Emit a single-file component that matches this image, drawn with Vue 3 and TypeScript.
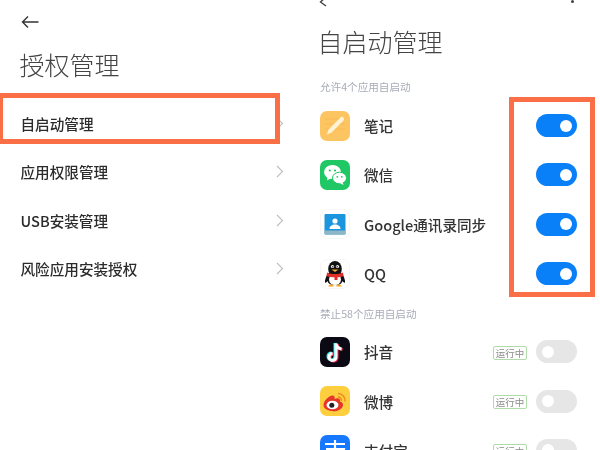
<script setup lang="ts">
interface MenuItem {
  label: string
}

interface AppRow {
  name: string
  icon: string
  running?: boolean
}

const menu: MenuItem[] = [
  { label: '自启动管理' },
  { label: '应用权限管理' },
  { label: 'USB安装管理' },
  { label: '风险应用安装授权' }
]

const allowed: AppRow[] = [
  { name: '笔记', icon: 'note' },
  { name: '微信', icon: 'wechat' },
  { name: 'Google通讯录同步', icon: 'contacts' },
  { name: 'QQ', icon: 'qq' }
]

const blocked: AppRow[] = [
  { name: '抖音', icon: 'douyin', running: true },
  { name: '微博', icon: 'weibo', running: true },
  { name: '支付宝', icon: 'alipay', running: true }
]
</script>

<template>
  <div class="page">
    <section class="left">
      <svg class="back" width="18" height="14" viewBox="0 0 18 14">
        <path d="M7 1.5 1.5 7 7 12.5M1.5 7H17.5" fill="none" stroke="#333" stroke-width="1.4" />
      </svg>
      <h1 class="title-left">授权管理</h1>
      <ul class="menu">
        <li v-for="item in menu" :key="item.label" class="menu-row">
          <span>{{ item.label }}</span>
          <svg width="8" height="13" viewBox="0 0 8 13">
            <path d="M1 1l5.5 5.5L1 12" fill="none" stroke="#bdbdbd" stroke-width="1.1" />
          </svg>
        </li>
      </ul>
      <div class="frame frame-menu"></div>
    </section>

    <section class="right">
      <div class="topbar">
        <svg width="12" height="8" viewBox="0 0 12 8">
          <path d="M7 -3 1.5 2 7 6" fill="none" stroke="#444" stroke-width="1.4" />
        </svg>
        <span class="dot"></span>
      </div>
      <h2 class="title-right">自启动管理</h2>
      <p class="caption">允许4个应用自启动</p>
      <ul class="apps apps-first">
        <li v-for="app in allowed" :key="app.name" class="app-row">
          <svg class="icon" width="30" height="30" viewBox="0 0 30 30">
            <template v-if="app.icon === 'note'">
              <rect width="30" height="30" rx="7" fill="#fdc561" />
              <path d="M5 8h20M5 13h20M5 18h20" stroke="#f5b54a" stroke-width=".7" />
              <path d="M7 23.5 8.5 18.5 20.5 6.5a2 2 0 0 1 3 3L11.5 21.5Z" fill="#fff3d6" />
            </template>
            <template v-else-if="app.icon === 'wechat'">
              <rect width="30" height="30" rx="7" fill="#1fc765" />
              <ellipse cx="12.5" cy="12" rx="8.5" ry="7" fill="#fff" />
              <path d="M7.5 16 7 20.5 11.5 18Z" fill="#fff" />
              <ellipse cx="19.5" cy="18" rx="7" ry="5.8" fill="#fff" stroke="#1fc765" stroke-width="1" />
              <path d="M22.5 22 23.5 25 20 23.2Z" fill="#fff" />
              <circle cx="9.8" cy="10.5" r="1.1" fill="#1fc765" />
              <circle cx="15" cy="10.5" r="1.1" fill="#1fc765" />
              <circle cx="17.3" cy="16.8" r=".9" fill="#1fc765" />
              <circle cx="21.8" cy="16.8" r=".9" fill="#1fc765" />
            </template>
            <template v-else-if="app.icon === 'contacts'">
              <rect x=".5" y=".5" width="29" height="29" rx="7" fill="#fff" stroke="#f6f6f6" />
              <rect x="4.5" y="5" width="21" height="20.5" rx="1" fill="#1b95dd" />
              <path d="M4.5 21.5h21v3a1 1 0 0 1-1 1h-19a1 1 0 0 1-1-1Z" fill="#8fb6c4" />
              <circle cx="15" cy="12" r="2.6" fill="#fff" />
              <path d="M9.5 20c0-3 2.5-4.5 5.500-4.500s5.500 1.500 5.500 4.500Z" fill="#fff" />
            </template>
            <template v-else>
              <rect x=".5" y=".5" width="29" height="29" rx="7" fill="#fff" stroke="#f6f6f6" />
              <ellipse cx="15" cy="10" rx="6.8" ry="8" fill="#111" />
              <path d="M8 14c-2 4-3.500 7-3 10 1-.5 2-1 2.500-2 1 3 3 4 7.500 4s6.500-1 7.500-4c.5 1 1.500 1.500 2.500 2 .5-3-1-6-3-10Z" fill="#111" />
              <ellipse cx="15" cy="20.5" rx="6" ry="5.5" fill="#fff" />
              <circle cx="12.5" cy="7.5" r="1.6" fill="#fff" />
              <circle cx="17.5" cy="7.5" r="1.6" fill="#fff" />
              <circle cx="12.8" cy="7.8" r=".7" fill="#111" />
              <circle cx="17.2" cy="7.8" r=".7" fill="#111" />
              <path d="M11.5 10.5h7L15 13Z" fill="#f5a623" />
              <path d="M7 13.5c5 2 11 2 16 0l.5 3.500c-2 .8-4 1.200-6 1.300V21h-3v-2.700c-3 0-6-.5-8-1.300Z" fill="#e0302a" />
              <path d="M8 27.5c1-2.500 4-2.500 5.500-1.500v1.500ZM22 27.500c-1-2.500-4-2.500-5.500-1.500v1.500Z" fill="#f5a623" />
            </template>
          </svg>
          <span class="app-name">{{ app.name }}</span>
          <span class="switch on"><i></i></span>
        </li>
      </ul>
      <p class="caption caption-second">禁止58个应用自启动</p>
      <ul class="apps apps-second">
        <li v-for="app in blocked" :key="app.name" class="app-row">
          <svg class="icon" width="30" height="30" viewBox="0 0 30 30">
            <template v-if="app.icon === 'douyin'">
              <rect width="30" height="30" rx="7" fill="#0b0a14" />
              <path d="M16 6.5v13.5a3.500 3.500 0 1 1-3.500-3.500M16 6.500c.5 3 2.500 5 5.500 5.500" fill="none" stroke="#25f4ee" stroke-width="3" transform="translate(-1 -.6)" />
              <path d="M16 6.5v13.5a3.500 3.500 0 1 1-3.500-3.500M16 6.500c.5 3 2.500 5 5.500 5.500" fill="none" stroke="#fe2c55" stroke-width="3" transform="translate(1 .6)" />
              <path d="M16 6.5v13.5a3.500 3.500 0 1 1-3.500-3.500M16 6.500c.5 3 2.500 5 5.500 5.500" fill="none" stroke="#fff" stroke-width="3" />
            </template>
            <template v-else-if="app.icon === 'weibo'">
              <rect width="30" height="30" rx="7" fill="#fdcf3f" />
              <path d="M13 25c-5.500 0-9.500-2.500-9.500-6 0-4 5.500-9.500 9-9.500 2 0 2.500 1.500 2 3.500 3-1.200 5.500-.8 5.500 1.500 0 .5 0 1 0 1 2 .5 3 1.800 3 3.500 0 3.500-4.500 6.500-10 6.500Z" fill="#e6352b" />
              <ellipse cx="12.5" cy="19" rx="6" ry="4.3" fill="#fff" />
              <circle cx="11.8" cy="19.3" r="2.5" fill="#222" />
              <path d="M18 7.5a7 7 0 0 1 7 8M18 11a3.500 3.500 0 0 1 3.500 4" fill="none" stroke="#f28a1e" stroke-width="1.5" />
            </template>
            <template v-else>
              <rect width="30" height="30" rx="7" fill="#1677ff" />
              <path d="M5 9h20M15 5v8M6 14h18c-2 6-8 11-16 12M9 17c3 5 9 8 16 9" fill="none" stroke="#fff" stroke-width="2.2" />
            </template>
          </svg>
          <span class="app-name">{{ app.name }}</span>
          <span v-if="app.running" class="badge">运行中</span>
          <span class="switch"><i></i></span>
        </li>
      </ul>
      <div class="frame frame-toggles"></div>
    </section>
  </div>
</template>

<style>
html,
body {
  margin: 0;
  background: #fff;
  overflow: hidden;
}
</style>

<style scoped>
.page {
  display: flex;
  width: 600px;
  height: 450px;
  overflow: hidden;
  background: #fff;
  color: #222;
  font-family: "Noto Sans CJK SC", "Noto Sans", sans-serif;
}

ul {
  margin: 0;
  padding: 0;
  list-style: none;
}

/* the reference is a slightly soft upscaled photo */
ul,
h1,
h2,
.caption,
.back {
  filter: blur(.35px);
}

.left {
  width: 300px;
  padding-top: 15px;
  box-sizing: border-box;
}

.back {
  display: block;
  margin-left: 21px;
}

.title-left {
  margin: 17px 0 0 19.5px;
  font-size: 25px;
  line-height: 36px;
  font-weight: 300;
  color: #444;
}

.menu {
  margin-top: 17.5px;
}

.menu-row {
  display: flex;
  align-items: center;
  justify-content: space-between;
  height: 48.3px;
  padding: 0 16px 0 20.5px;
  font-size: 14.6px;
  font-weight: 500;
  color: #2b2b2b;
}

.right {
  flex: 1;
  padding: 0 23px 0 20px;
}

.topbar {
  display: flex;
  justify-content: space-between;
  height: 6px;
  margin-left: -1px;
}

.dot {
  width: 3px;
  height: 3px;
  margin-right: 3px;
  border-radius: 50%;
  background: #444;
}

.title-right {
  margin: 20px 0 0 -2.5px;
  font-size: 25px;
  line-height: 30px;
  font-weight: 300;
  color: #444;
}

.caption {
  margin: 23px 0 0;
  font-size: 10.6px;
  line-height: 16px;
  color: #a8acb8;
}

.caption-second {
  margin-top: 8px;
}

.apps-first {
  margin-top: 6px;
}

.apps-second {
  margin-top: 5px;
}

.app-row {
  display: flex;
  align-items: center;
  height: 49.3px;
  font-size: 14.6px;
  font-weight: 500;
  color: #333;
}

.icon {
  flex: none;
  margin-right: 14px;
}

.app-name {
  flex: 1;
}

.badge {
  box-sizing: border-box;
  width: 34px;
  height: 14px;
  margin: 2px 9px 0 0;
  border: 1.2px solid #aedba8;
  border-radius: 2px;
  font-size: 9.5px;
  line-height: 12px;
  text-align: center;
  font-weight: 400;
  color: #8a8a8a;
  white-space: nowrap;
  overflow: hidden;
}

.switch {
  display: flex;
  align-items: center;
  box-sizing: border-box;
  width: 41px;
  height: 23px;
  padding: 0 5.5px;
  border-radius: 12px;
  background: #e6e6e6;
}

.switch i {
  width: 12px;
  height: 12px;
  border-radius: 50%;
  background: #fff;
}

.switch.on {
  justify-content: flex-end;
  background: #0a80f8;
}

.frame {
  position: absolute;
  box-sizing: border-box;
  border: 5px solid #fa6f45;
  pointer-events: none;
}

.frame-menu {
  left: -2px;
  top: 93px;
  width: 282px;
  height: 51px;
}

.frame-toggles {
  left: 509px;
  top: 97px;
  width: 86px;
  height: 200px;
}
</style>
